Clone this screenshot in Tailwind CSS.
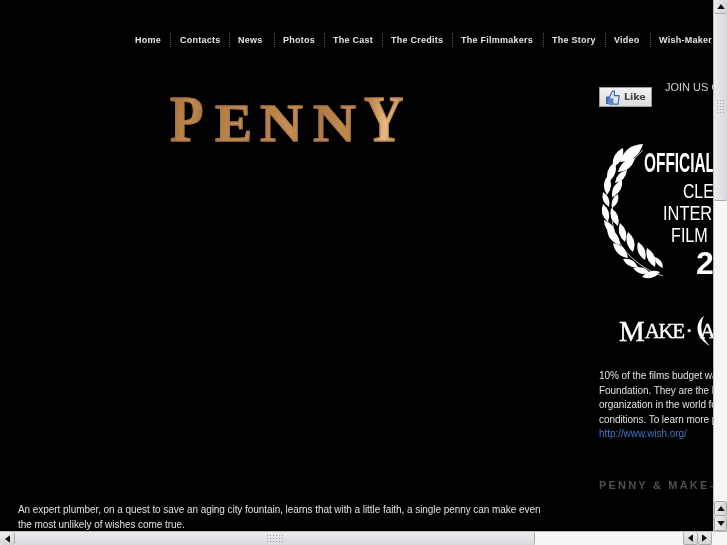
<!DOCTYPE html>
<html lang="en">
<head>
<meta charset="UTF-8">
<title>Penny</title>
<script src="https://cdn.jsdelivr.net/npm/@tailwindcss/browser@4"></script>
</head>
<body class="bg-black">
<div class="w-[727px] h-[545px] flex flex-col overflow-hidden blur-[0.35px] font-['Liberation_Sans',sans-serif]">
  <div class="flex h-[531px]">
    <!-- page -->
    <div class="w-[713px] h-[531px] bg-black overflow-hidden flex flex-col">
      <nav class="flex items-center h-[14px] mt-[33px] ml-[135px] w-[640px] text-[9px] font-bold tracking-[0.25px] text-[#e4e4e4] whitespace-nowrap leading-[14px]">
        <a class="w-[35px]">Home</a>
        <a class="w-[59px] pl-[9px] border-l border-dotted border-[#555] h-[14px]">Contacts</a>
        <a class="w-[45px] pl-[8px] border-l border-dotted border-[#555] h-[14px]">News</a>
        <a class="w-[50px] pl-[8px] border-l border-dotted border-[#555] h-[14px]">Photos</a>
        <a class="w-[58px] pl-[8px] border-l border-dotted border-[#555] h-[14px]">The Cast</a>
        <a class="w-[70px] pl-[8px] border-l border-dotted border-[#555] h-[14px]">The Credits</a>
        <a class="w-[91px] pl-[8px] border-l border-dotted border-[#555] h-[14px]">The Filmmakers</a>
        <a class="w-[62px] pl-[8px] border-l border-dotted border-[#555] h-[14px]">The Story</a>
        <a class="w-[45px] pl-[8px] border-l border-dotted border-[#555] h-[14px]">Video</a>
        <a class="pl-[8px] border-l border-dotted border-[#555] h-[14px]">Wish-Maker</a>
      </nav>
      <div class="flex flex-1 min-h-0">
        <div class="w-[599px] shrink-0 flex flex-col justify-between">
          <h1 class="flex items-baseline pl-[170px] pt-[42px] h-[112px] leading-[60px] font-['Liberation_Serif',serif] font-bold">
            <span class="block w-[45px] shrink-0 text-[66px] origin-left scale-x-[.83] text-transparent bg-clip-text bg-[linear-gradient(100deg,#a06a36,#c08a52,#9c6836)] [-webkit-text-stroke:1px_#a8723f]">P</span>
            <span class="block w-[45px] shrink-0 text-[53px] origin-left scale-x-[1.05] text-transparent bg-clip-text bg-[linear-gradient(100deg,#a8723f,#c48d55,#a8723f)] [-webkit-text-stroke:1px_#ad7843]">E</span>
            <span class="block w-[53px] shrink-0 text-[53px] origin-left scale-x-[1.12] text-transparent bg-clip-text bg-[linear-gradient(100deg,#b27c45,#c48d55,#a8723f)] [-webkit-text-stroke:1px_#ad7843]">N</span>
            <span class="block w-[51px] shrink-0 text-[53px] origin-left scale-x-[1.12] text-transparent bg-clip-text bg-[linear-gradient(100deg,#a8723f,#c08a52,#b27c45)] [-webkit-text-stroke:1px_#ad7843]">N</span>
            <span class="block w-[48px] shrink-0 text-[66px] origin-left scale-x-[.83] text-transparent bg-clip-text bg-[linear-gradient(100deg,#a8723f,#e8b880_55%,#a8723f)] [-webkit-text-stroke:1px_#b27c45]">Y</span>
          </h1>
          <p class="pl-[18px] w-[560px] -mb-px text-[10px] leading-[14.5px] tracking-[-0.06px] text-[#e0e0e0] whitespace-nowrap">An expert plumber, on a quest to save an aging city fountain, learns that with a little faith, a single penny can make even<br>the most unlikely of wishes come true.</p>
        </div>
        <aside class="flex-1 min-w-0 overflow-hidden whitespace-nowrap">
          <div class="flex items-start pt-[33px] h-[97px]">
            <button class="w-[53px] h-[20px] shrink-0 mt-[7px] flex items-center gap-[3px] pl-[5px] border border-[#999] bg-[linear-gradient(#f2f2f2,#dcdcdc)] font-['DejaVu_Sans',sans-serif] text-[9.5px] font-bold text-[#444]">
              <svg class="w-[16px] h-[15px] shrink-0" viewBox="0 0 17 16"><path d="M1 7h4v8H1z" fill="#3b66ad"/><path d="M5 7l3-6h2v5h5l-1 9H5z" fill="#dfe6f2" stroke="#3b66ad" stroke-width="1.2"/><path d="M3 9h6v6H3z" fill="#5b86c8"/></svg>
              Like
            </button>
            <span class="ml-[13px] text-[11px] leading-[14px] text-[#cfcfcf]">JOIN US ON FACEBOOK</span>
          </div>
          <div class="flex h-[140px]">
            <svg id="laurel" class="w-[45px] h-[140px] shrink-0 overflow-visible ml-[4px]" viewBox="0 0 45 140"><path d="M40 6C12 32 2 70 14 94C24 114 42 126 60 132" fill="none" stroke="#bbb" stroke-width="1"/></svg>
            <div class="flex flex-col text-white">
              <div class="text-[28px] leading-[24px] mt-[7px] -ml-[4px] font-bold origin-left scale-x-[.55]">OFFICIAL SELECTION</div>
              <div class="text-[21px] leading-[22px] mt-[5px] ml-[35px] origin-left scale-x-[.75]">CLEVELAND</div>
              <div class="text-[21px] leading-[22px] ml-[15px] origin-left scale-x-[.78]">INTERNATIONAL</div>
              <div class="text-[21px] leading-[22px] ml-[23px] origin-left scale-x-[.77]">FILM FESTIVAL</div>
              <div class="text-[32px] leading-[30px] mt-[2px] font-bold ml-[48px]">2012</div>
            </div>
          </div>
          <div class="mt-[29px] ml-[20px] h-[36px] flex items-center font-['Liberation_Serif',serif] text-white leading-none [-webkit-text-stroke:0.4px_#fff]">
            <span class="text-[29px]">M</span><span class="text-[21px] tracking-[-1.5px]">AKE</span><span class="text-[16px] font-bold ml-[3px]">·</span><svg class="w-[18px] h-[36px] shrink-0 ml-[1px]" viewBox="0 0 18 36"><path d="M11 3C2 9 1 24 17 33C8 25 6 12 11 3z" fill="#fff"/></svg><span class="text-[22px] -ml-[11px]">A</span>
          </div>
          <p class="mt-[20px] text-[10px] leading-[14.5px] tracking-[-0.06px] text-[#e0e0e0]">10% of the films budget was donated to the Make-A-Wish<br>Foundation. They are the largest wish-granting<br>organization in the world for children with life threatening<br>conditions. To learn more please visit<br><a class="text-[#3d78c9]">http://www.wish.org/</a></p>
          <h2 class="mt-[36px] text-[11px] font-bold tracking-[2.2px] leading-[14px] text-[#4f4f4f]">PENNY &amp; MAKE-A-WISH</h2>
        </aside>
      </div>
    </div>
    <!-- vertical scrollbar -->
    <div class="w-[14px] h-[531px] flex flex-col bg-[#f6f6f6] border-l border-[#bbb]">
      <div class="h-[14px] rounded-[2px] bg-[linear-gradient(90deg,#ececec,#d4d4d8)] border-b border-[#aaa] flex items-center justify-center"><svg class="w-[8px] h-[5px]" viewBox="0 0 9 6"><path d="M4.500 0L9 6H0z" fill="#111"/></svg></div>
      <div class="h-[187px] rounded-[2px] bg-[linear-gradient(90deg,#ececf0,#d8d8de)] border-b border-[#aaa] flex items-center justify-center"><div class="w-[10px] h-[16px] bg-[radial-gradient(#a0a0a0_1px,transparent_1px)] bg-[length:3px_3px]"></div></div>
      <div class="flex-1"></div>
      <div class="h-[15px] rounded-[2px] bg-[linear-gradient(90deg,#ececec,#d4d4d8)] border border-[#aaa] flex items-center justify-center"><svg class="w-[8px] h-[5px]" viewBox="0 0 9 6"><path d="M4.500 0L9 6H0z" fill="#111"/></svg></div>
      <div class="h-[15px] rounded-[2px] bg-[linear-gradient(90deg,#ececec,#d4d4d8)] border border-t-0 border-[#aaa] flex items-center justify-center"><svg class="w-[8px] h-[5px]" viewBox="0 0 9 6"><path d="M0 0H9L4.500 6z" fill="#111"/></svg></div>
    </div>
  </div>
  <!-- horizontal scrollbar -->
  <div class="h-[14px] flex bg-[#f6f6f6] border-t border-[#bbb]">
    <div class="w-[15px] rounded-[2px] bg-[linear-gradient(#ececec,#d4d4d8)] border-r border-[#aaa] flex items-center justify-center"><svg class="w-[5px] h-[8px]" viewBox="0 0 6 9"><path d="M0 4.500L6 0V9z" fill="#111"/></svg></div>
    <div class="w-[520px] rounded-[2px] bg-[linear-gradient(#ececf0,#d8d8de)] border-r border-[#aaa] flex items-center justify-center"><div class="w-[18px] h-[10px] bg-[radial-gradient(#a0a0a0_1px,transparent_1px)] bg-[length:3px_3px]"></div></div>
    <div class="w-[148px]"></div>
    <div class="w-[15px] rounded-[2px] bg-[linear-gradient(#ececec,#d4d4d8)] border border-t-0 border-[#aaa] flex items-center justify-center"><svg class="w-[5px] h-[8px]" viewBox="0 0 6 9"><path d="M0 4.500L6 0V9z" fill="#111"/></svg></div>
    <div class="w-[14px] rounded-[2px] bg-[linear-gradient(#ececec,#d4d4d8)] border-r border-b border-[#aaa] flex items-center justify-center"><svg class="w-[5px] h-[8px]" viewBox="0 0 6 9"><path d="M0 0L6 4.500L0 9z" fill="#111"/></svg></div>
  </div>
</div>
<script>
  // leaves of the laurel: base x, y, tip x, y, in svg coords (svg starts at 603,144 on the page)
  const leaves = [
    [17,18,40,0],[32,14,15,28],[10,23,20,4],[5,38,12,18],[24,26,12,39],[4,51,5,31],[19,36,9,53],[6,63,0,48],
    [15,50,9,64],[0,60,5,78],[8,64,15,82],[1,76,12,91],[17,79,22,98],[4,84,17,101],[25,88,30,108],[10,99,25,114],[35,98,42,116],
    [20,115,35,123],[44,104,52,123],[30,124,47,129],[52,113,60,124],[39,133,57,128]
  ];
  const laurel = document.getElementById('laurel');
  leaves.forEach(([x1, y1, x2, y2]) => {
    const mx = (x1 + x2) / 2, my = (y1 + y2) / 2;
    const nx = (y2 - y1) * 0.36, ny = (x1 - x2) * 0.36;
    const leaf = document.createElementNS('http://www.w3.org/2000/svg', 'path');
    leaf.setAttribute('d', `M${x1} ${y1}Q${mx + nx} ${my + ny} ${x2} ${y2}Q${mx - nx} ${my - ny} ${x1} ${y1}Z`);
    leaf.setAttribute('fill', '#fff');
    laurel.appendChild(leaf);
  });
</script>
</body>
</html>
